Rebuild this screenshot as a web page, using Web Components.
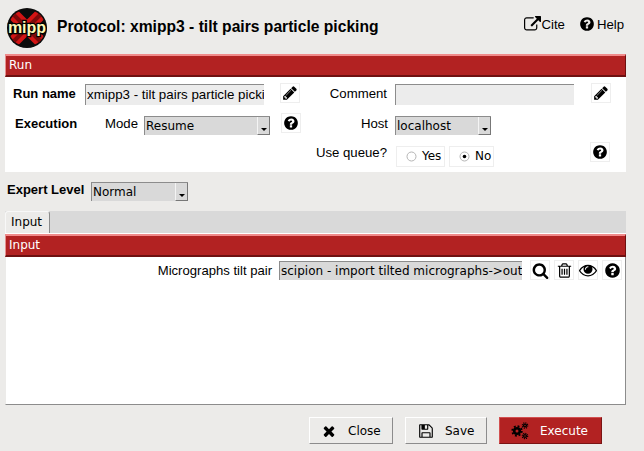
<!DOCTYPE html>
<html>
<head>
<meta charset="utf-8">
<title>Protocol</title>
<style>
    html, body { margin: 0; height: 100%; }
    body {
        width: 644px;
        height: 451px;
        overflow: hidden;
        background: #ecebe9;
        color: #000;
        font: 13px "Liberation Sans", Arial, sans-serif;
    }
    protocol-form { height: 451px; }
</style>
</head>
<body>
<protocol-form></protocol-form>

<script>
const ICONS = {
    pencil: 'M491 1536l91-91-235-235-91 91v107h128v128h107zm523-928q0-22-22-22-10 0-17 7l-542 542q-7 7-7 17 0 22 22 22 10 0 17-7l542-542q7-7 7-17zm-54-192l416 416-832 832h-416v-416zm683 96q0 53-37 90l-166 166-416-416 166-165q36-38 90-38 53 0 91 38l235 234q37 39 37 91z',
    help: 'M1024 1376v-192q0-14-9-23t-23-9h-192q-14 0-23 9t-9 23v192q0 14 9 23t23 9h192q14 0 23-9t9-23zm256-672q0-88-55.5-163t-138.5-116-170-41q-243 0-371 213-15 24 8 42l132 100q7 6 19 6 16 0 25-12 53-68 86-92 34-24 86-24 48 0 85.5 26t37.5 59q0 38-20 61t-68 45q-63 28-115.5 86.5t-52.5 125.5v36q0 14 9 23t23 9h192q14 0 23-9t9-23q0-19 21.5-49.5t54.5-49.5q32-18 49-28.5t46-35 44.5-48 28-60.5 12.5-81zm384 192q0 209-103 385.5t-279.5 279.5-385.5 103-385.5-103-279.5-279.5-103-385.5 103-385.5 279.5-279.5 385.5-103 385.5 103 279.5 279.5 103 385.5z',
    search: 'M1216 832q0-185-131.5-316.5t-316.5-131.5-316.5 131.5-131.5 316.5 131.5 316.5 316.5 131.5 316.5-131.5 131.5-316.5zm512 832q0 52-38 90t-90 38q-54 0-90-38l-343-342q-179 124-399 124-143 0-273.5-55.5t-225-150-150-225-55.5-273.5 55.5-273.5 150-225 225-150 273.5-55.5 273.5 55.5 225 150 150 225 55.5 273.5q0 220-124 399l343 343q37 37 37 90z',
    trash: 'M704 736v576q0 14-9 23t-23 9h-64q-14 0-23-9t-9-23v-576q0-14 9-23t23-9h64q14 0 23 9t9 23zm256 0v576q0 14-9 23t-23 9h-64q-14 0-23-9t-9-23v-576q0-14 9-23t23-9h64q14 0 23 9t9 23zm256 0v576q0 14-9 23t-23 9h-64q-14 0-23-9t-9-23v-576q0-14 9-23t23-9h64q14 0 23 9t9 23zm128 724v-948h-896v948q0 22 7 40.5t14.5 27 10.5 8.5h832q3 0 10.5-8.5t14.5-27 7-40.5zm-672-1076h448l-48-117q-7-9-17-11h-317q-10 2-17 11zm928 32v64q0 14-9 23t-23 9h-96v948q0 83-47 143.5t-113 60.5h-832q-66 0-113-58.5t-47-141.5v-952h-96q-14 0-23-9t-9-23v-64q0-14 9-23t23-9h309l70-167q15-37 54-63t79-26h320q40 0 79 26t54 63l70 167h309q14 0 23 9t9 23z',
    eye: 'M1664 960q-152-236-381-353 61 104 61 225 0 185-131.5 316.5t-316.5 131.5-316.5-131.5-131.5-316.5q0-121 61-225-229 117-381 353 133 205 333.5 326.5t434.5 121.5 434.5-121.5 333.5-326.5zm-720-384q0-20-14-34t-34-14q-125 0-214.5 89.5t-89.5 214.5q0 20 14 34t34 14 34-14 14-34q0-86 61-147t147-61q20 0 34-14t14-34zm848 384q0 34-20 69-140 230-376.5 368.5t-499.5 138.5-499.5-139-376.5-368q-20-35-20-69t20-69q140-229 376.5-368t499.5-139 499.5 139 376.5 368q20 35 20 69z',
    close: 'M1490 1322q0 40-28 68l-136 136q-28 28-68 28t-68-28l-294-294-294 294q-28 28-68 28t-68-28l-136-136q-28-28-28-68t28-68l294-294-294-294q-28-28-28-68t28-68l136-136q28-28 68-28t68 28l294 294 294-294q28-28 68-28t68 28l136 136q28 28 28 68t-28 68l-294 294 294 294q28 28 28 68z',
    save: 'M512 1536h768v-384h-768v384zm896 0h128v-896q0-14-10-38.5t-20-34.5l-281-281q-10-10-34-20t-39-10v416q0 40-28 68t-68 28h-576q-40 0-68-28t-28-68v-416h-128v1280h128v-416q0-40 28-68t68-28h832q40 0 68 28t28 68v416zm-384-928v-320q0-13-9.5-22.5t-22.5-9.5h-192q-13 0-22.5 9.5t-9.5 22.5v320q0 13 9.5 22.5t22.5 9.5h192q13 0 22.5-9.5t9.5-22.5zm640 32v928q0 40-28 68t-68 28h-1344q-40 0-68-28t-28-68v-1344q0-40 28-68t68-28h928q40 0 88 20t76 48l280 280q28 28 48 76t20 88z',
    cite: 'M1408 928v320q0 119-84.5 203.5t-203.5 84.5h-832q-119 0-203.5-84.5t-84.5-203.5v-832q0-119 84.5-203.5t203.5-84.5h704q14 0 23 9t9 23v64q0 14-9 23t-23 9h-704q-66 0-113 47t-47 113v832q0 66 47 113t113 47h832q66 0 113-47t47-113v-320q0-14 9-23t23-9h64q14 0 23 9t9 23zm384-864v512q0 26-19 45t-45 19-45-19l-176-176-652 652q-10 10-23 10t-23-10l-114-114q-10-10-10-23t10-23l652-652-176-176q-19-19-19-45t19-45 45-19h512q26 0 45 19t19 45z'
};

function svgIcon(name, size) {
    if (name === 'cogs') {
        // no single path for this one, three gears made of dashed rings
        return `<svg width="${size}" height="${size}" viewBox="0 0 20 20">
            <g fill="none" stroke="#000">
                <circle cx="6" cy="10" r="2.8" stroke-width="2.6"/>
                <circle cx="6" cy="10" r="4.8" stroke-width="1.8" stroke-dasharray="1.9 1.87"/>
                <circle cx="14" cy="4.5" r="1.4" stroke-width="1.4"/>
                <circle cx="14" cy="4.5" r="2.7" stroke-width="1.2" stroke-dasharray="1.1 1.02"/>
                <circle cx="14" cy="15" r="1.4" stroke-width="1.4"/>
                <circle cx="14" cy="15" r="2.7" stroke-width="1.2" stroke-dasharray="1.1 1.02"/>
            </g></svg>`;
    }
    return `<svg width="${size}" height="${size}" viewBox="0 0 1792 1792"><path fill="#000" d="${ICONS[name]}"/></svg>`;
}

class XmippLogo extends HTMLElement {
    constructor() {
        super();
        this.attachShadow({ mode: 'open' });
        this.shadowRoot.innerHTML = `
            <style>
                :host { display: block; width: 40px; height: 40px; margin-top: 1px; }
                svg { display: block; }
                text {
                    font: bold 16px "Liberation Sans", sans-serif;
                    fill: #fdf8b8;
                    stroke: #000;
                    stroke-width: 2.5px;
                    paint-order: stroke;
                }
            </style>
            <svg width="40" height="40" viewBox="0 0 40 40">
                <defs><clipPath id="disc"><circle cx="20" cy="20" r="18.5"/></clipPath></defs>
                <circle cx="20" cy="20" r="20" fill="#0c0c0c"/>
                <g clip-path="url(#disc)" fill="none" stroke-linecap="butt">
                    <path d="M3 3 L37 37 M37 3 L3 37" stroke="#d31414" stroke-width="12"/>
                    <path d="M6 6 L34 34 M34 6 L6 34" stroke="#7c0a0a" stroke-width="4"/>
                </g>
                <text x="20" y="25" text-anchor="middle">mipp</text>
            </svg>`;
    }
}

class IconButton extends HTMLElement {
    constructor() {
        super();
        this.attachShadow({ mode: 'open' });
        const icon = this.getAttribute('icon') || 'help';
        const size = this.getAttribute('size') || 16;
        this.shadowRoot.innerHTML = `
            <style>
                :host {
                    display: flex;
                    align-items: center;
                    justify-content: center;
                    box-sizing: border-box;
                    width: 20px;
                    height: 20px;
                    border: 1px solid #eeeeee;
                    background: #fff;
                }
                svg { display: block; }
            </style>
            ${svgIcon(icon, size)}`;
    }
}

class TextEntry extends HTMLElement {
    constructor() {
        super();
        this.attachShadow({ mode: 'open' });
        this.shadowRoot.innerHTML = `
            <style>
                :host {
                    display: block;
                    box-sizing: border-box;
                    height: 21px;
                    border-top: 1px solid #8c8c8c;
                    border-left: 1px solid #8c8c8c;
                    background: #ececec;
                    overflow: hidden;
                    white-space: nowrap;
                    padding: 0 0 0 1px;
                    font: 13.33px/20px "Liberation Sans", sans-serif;
                    color: #000;
                }
                :host([dark]) {
                    background: #d9d9d9;
                    height: 19px;
                    font: 12px/18px "DejaVu Sans", sans-serif;
                }
            </style>
            <slot></slot>`;
    }
}

class ComboBox extends HTMLElement {
    constructor() {
        super();
        this.attachShadow({ mode: 'open' });
        this.shadowRoot.innerHTML = `
            <style>
                :host {
                    display: flex;
                    box-sizing: border-box;
                    height: 19px;
                    border-top: 1px solid #8c8c8c;
                    border-left: 1px solid #8c8c8c;
                    background: #d9d9d9;
                    font: 12px/18px "DejaVu Sans", sans-serif;
                    color: #000;
                }
                .value { flex: 1; padding-left: 1px; overflow: hidden; white-space: nowrap; }
                .arrow {
                    box-sizing: border-box;
                    width: 13px;
                    height: 18px;
                    background: #d9d9d9;
                    border-left: 1px solid #f4f4f4;
                    border-right: 1px solid #777;
                    border-bottom: 1px solid #777;
                    display: flex;
                    align-items: flex-end;
                    justify-content: center;
                    padding-bottom: 3px;
                }
                .arrow i {
                    display: block;
                    width: 0;
                    height: 0;
                    border-left: 3px solid transparent;
                    border-right: 3px solid transparent;
                    border-top: 3px solid #000;
                }
            </style>
            <div class="value"><slot></slot></div>
            <div class="arrow"><i></i></div>`;
    }
}

class RadioOption extends HTMLElement {
    constructor() {
        super();
        this.attachShadow({ mode: 'open' });
        const dot = this.hasAttribute('checked') ? '<circle cx="5.5" cy="5.5" r="1.8" fill="#000"/>' : '';
        this.shadowRoot.innerHTML = `
            <style>
                :host {
                    display: flex;
                    align-items: center;
                    box-sizing: border-box;
                    height: 21px;
                    padding-left: 9px;
                    gap: 5px;
                    border: 1px solid #eeeeee;
                    font: 12px/17px "DejaVu Sans", sans-serif;
                    color: #000;
                }
                svg { display: block; margin-top: -1px; }
                span { margin-top: -1px; }
            </style>
            <svg width="11" height="11" viewBox="0 0 11 11">
                <circle cx="5.5" cy="5.5" r="4.5" fill="#fff" stroke="#b5b5b5"/>
                ${dot}
            </svg>
            <span><slot></slot></span>`;
    }
}

class SectionBar extends HTMLElement {
    constructor() {
        super();
        this.attachShadow({ mode: 'open' });
        this.shadowRoot.innerHTML = `
            <style>
                :host {
                    display: block;
                    box-sizing: border-box;
                    height: 23px;
                    padding-left: 3px;
                    background: #b22222;
                    border-top: 2px solid #f08a8a;
                    border-left: 1px solid #e59090;
                    border-right: 1px solid #6e1010;
                    border-bottom: 2px solid #6e1010;
                    color: #fff;
                    font: 12px/19px "DejaVu Sans", sans-serif;
                }
            </style>
            <slot></slot>`;
    }
}

class ActionButton extends HTMLElement {
    constructor() {
        super();
        this.attachShadow({ mode: 'open' });
        const icon = this.getAttribute('icon');
        this.shadowRoot.innerHTML = `
            <style>
                :host {
                    display: flex;
                    align-items: center;
                    box-sizing: border-box;
                    height: 27px;
                    padding-left: 12px;
                    gap: 11px;
                    background: #ecebe9;
                    border: 1px solid;
                    border-color: #fff #8c8c8c #8c8c8c #fff;
                    font: 12px "DejaVu Sans", sans-serif;
                    color: #000;
                }
                :host([primary]) {
                    background: #b22222;
                    border-color: #d25050 #7a1414 #7a1414 #d25050;
                    color: #fff;
                }
                svg { display: block; }
            </style>
            ${svgIcon(icon, this.getAttribute('size') || 16)}
            <span><slot></slot></span>`;
    }
}

class ProtocolHeader extends HTMLElement {
    constructor() {
        super();
        this.attachShadow({ mode: 'open' });
        this.shadowRoot.innerHTML = `
            <style>
                :host {
                    display: flex;
                    align-items: center;
                    box-sizing: border-box;
                    height: 54px;
                    padding: 0 20px 0 7px;
                }
                h1 {
                    margin: 0 0 0 10px;
                    font: bold 15.65px "Liberation Sans", sans-serif;
                    flex: 1;
                }
                .link { display: flex; align-items: center; gap: 0; font-size: 13.2px; margin-top: -6px; }
                .link + .link { margin-left: 14px; gap: 2px; }
                svg { display: block; }
            </style>
            <xmipp-logo></xmipp-logo>
            <h1><slot></slot></h1>
            <div class="link">${svgIcon('cite', 17)}<span>Cite</span></div>
            <div class="link">${svgIcon('help', 16)}<span>Help</span></div>`;
    }
}

class RunSection extends HTMLElement {
    constructor() {
        super();
        this.attachShadow({ mode: 'open' });
        this.shadowRoot.innerHTML = `
            <style>
                :host { display: block; margin-left: 5px; width: 621px; background: #fff; }
                .rows { height: 95px; box-sizing: border-box; padding-top: 7px; }
                .row { display: flex; align-items: flex-start; }
                .row + .row { margin-top: 9px; }
                .row.third { margin-top: 8px; }
                b, .lbl { font-size: 13px; line-height: 20px; }
                .lbl { font-size: 13.2px; text-align: right; white-space: nowrap; }
                b.run { margin-left: 8px; width: 72px; }
                b.exec { margin-left: 10px; width: 90px; }
                icon-button { margin-top: -1px; }
            </style>
            <section-bar>Run</section-bar>
            <div class="rows">
                <div class="row">
                    <b class="run">Run name</b>
                    <text-entry style="width:179px">xmipp3 - tilt pairs particle picki</text-entry>
                    <icon-button icon="pencil" style="margin-left:16px"></icon-button>
                    <span class="lbl" style="width:87px">Comment</span>
                    <text-entry style="width:179px;margin-left:8px"></text-entry>
                    <icon-button icon="pencil" style="margin-left:17px"></icon-button>
                </div>
                <div class="row">
                    <b class="exec">Execution</b>
                    <span class="lbl" style="width:32px">Mode</span>
                    <combo-box style="width:126px;margin:2px 0 0 7px">Resume</combo-box>
                    <icon-button icon="help" style="margin-left:11px"></icon-button>
                    <span class="lbl" style="width:87px">Host</span>
                    <combo-box style="width:96px;margin:2px 0 0 7px">localhost</combo-box>
                </div>
                <div class="row third">
                    <span class="lbl" style="width:382px">Use queue?</span>
                    <radio-option style="width:49px;margin:3px 0 0 9px">Yes</radio-option>
                    <radio-option checked style="width:45px;margin:3px 0 0 4px">No</radio-option>
                    <icon-button icon="help" style="margin-left:96px"></icon-button>
                </div>
            </div>`;
    }
}

class ExpertRow extends HTMLElement {
    constructor() {
        super();
        this.attachShadow({ mode: 'open' });
        this.shadowRoot.innerHTML = `
            <style>
                :host {
                    display: flex;
                    box-sizing: border-box;
                    height: 39px;
                    padding: 10px 0 0 7px;
                }
                b { width: 84px; font-size: 13px; line-height: 16px; }
            </style>
            <b>Expert Level</b>
            <combo-box style="width:97px"><slot></slot></combo-box>`;
    }
}

class InputTabs extends HTMLElement {
    constructor() {
        super();
        this.attachShadow({ mode: 'open' });
        this.shadowRoot.innerHTML = `
            <style>
                :host { display: block; margin-left: 5px; width: 621px; }
                .tabs { height: 23px; box-sizing: border-box; background: #d9d9d9; border-bottom: 1px solid #fff; }
                .tab {
                    box-sizing: border-box;
                    width: 45px;
                    height: 22px;
                    background: #ecebe9;
                    border: 1px solid #f8f8f8;
                    border-right-color: #8c8c8c;
                    border-bottom: 0;
                    border-radius: 3px 3px 0 0;
                    padding-left: 5px;
                    font: 12px/21px "DejaVu Sans", sans-serif;
                }
                .panel {
                    box-sizing: border-box;
                    height: 148px;
                    background: #fff;
                    border-right: 1px solid #8c8c8c;
                    border-bottom: 1px solid #8c8c8c;
                    border-left: 1px solid #ecebe9;
                }
                .row { display: flex; align-items: flex-start; padding: 3px 0 0 0; }
                .lbl { margin-left: auto; font-size: 13.1px; line-height: 21px; white-space: nowrap; }
                .icons { display: flex; gap: 4px; margin: 0 3px 0 8px; }
            </style>
            <div class="tabs"><div class="tab">Input</div></div>
            <section-bar>Input</section-bar>
            <div class="panel">
                <div class="row">
                    <span class="lbl">Micrographs tilt pair</span>
                    <text-entry dark style="width:243px;margin:1px 0 0 7px">scipion - import tilted micrographs-&gt;out</text-entry>
                    <div class="icons">
                        <icon-button icon="search" size="17"></icon-button>
                        <icon-button icon="trash" size="17"></icon-button>
                        <icon-button icon="eye" size="18"></icon-button>
                        <icon-button icon="help" size="17"></icon-button>
                    </div>
                </div>
            </div>`;
    }
}

class ProtocolForm extends HTMLElement {
    constructor() {
        super();
        this.attachShadow({ mode: 'open' });
        this.shadowRoot.innerHTML = `
            <style>
                :host { display: block; }
                .footer {
                    display: flex;
                    justify-content: flex-end;
                    gap: 12px;
                    padding: 12px 42px 0 0;
                }
            </style>
            <protocol-header>Protocol: xmipp3 - tilt pairs particle picking</protocol-header>
            <run-section></run-section>
            <expert-row>Normal</expert-row>
            <input-tabs></input-tabs>
            <div class="footer">
                <action-button icon="close" style="width:84px;padding-left:11px">Close</action-button>
                <action-button icon="save" style="width:82px">Save</action-button>
                <action-button icon="cogs" size="20" primary style="width:103px;padding-left:11px;gap:9px">Execute</action-button>
            </div>`;
    }
}

customElements.define('xmipp-logo', XmippLogo);
customElements.define('icon-button', IconButton);
customElements.define('text-entry', TextEntry);
customElements.define('combo-box', ComboBox);
customElements.define('radio-option', RadioOption);
customElements.define('section-bar', SectionBar);
customElements.define('action-button', ActionButton);
customElements.define('protocol-header', ProtocolHeader);
customElements.define('run-section', RunSection);
customElements.define('expert-row', ExpertRow);
customElements.define('input-tabs', InputTabs);
customElements.define('protocol-form', ProtocolForm);
</script>
</body>
</html>
